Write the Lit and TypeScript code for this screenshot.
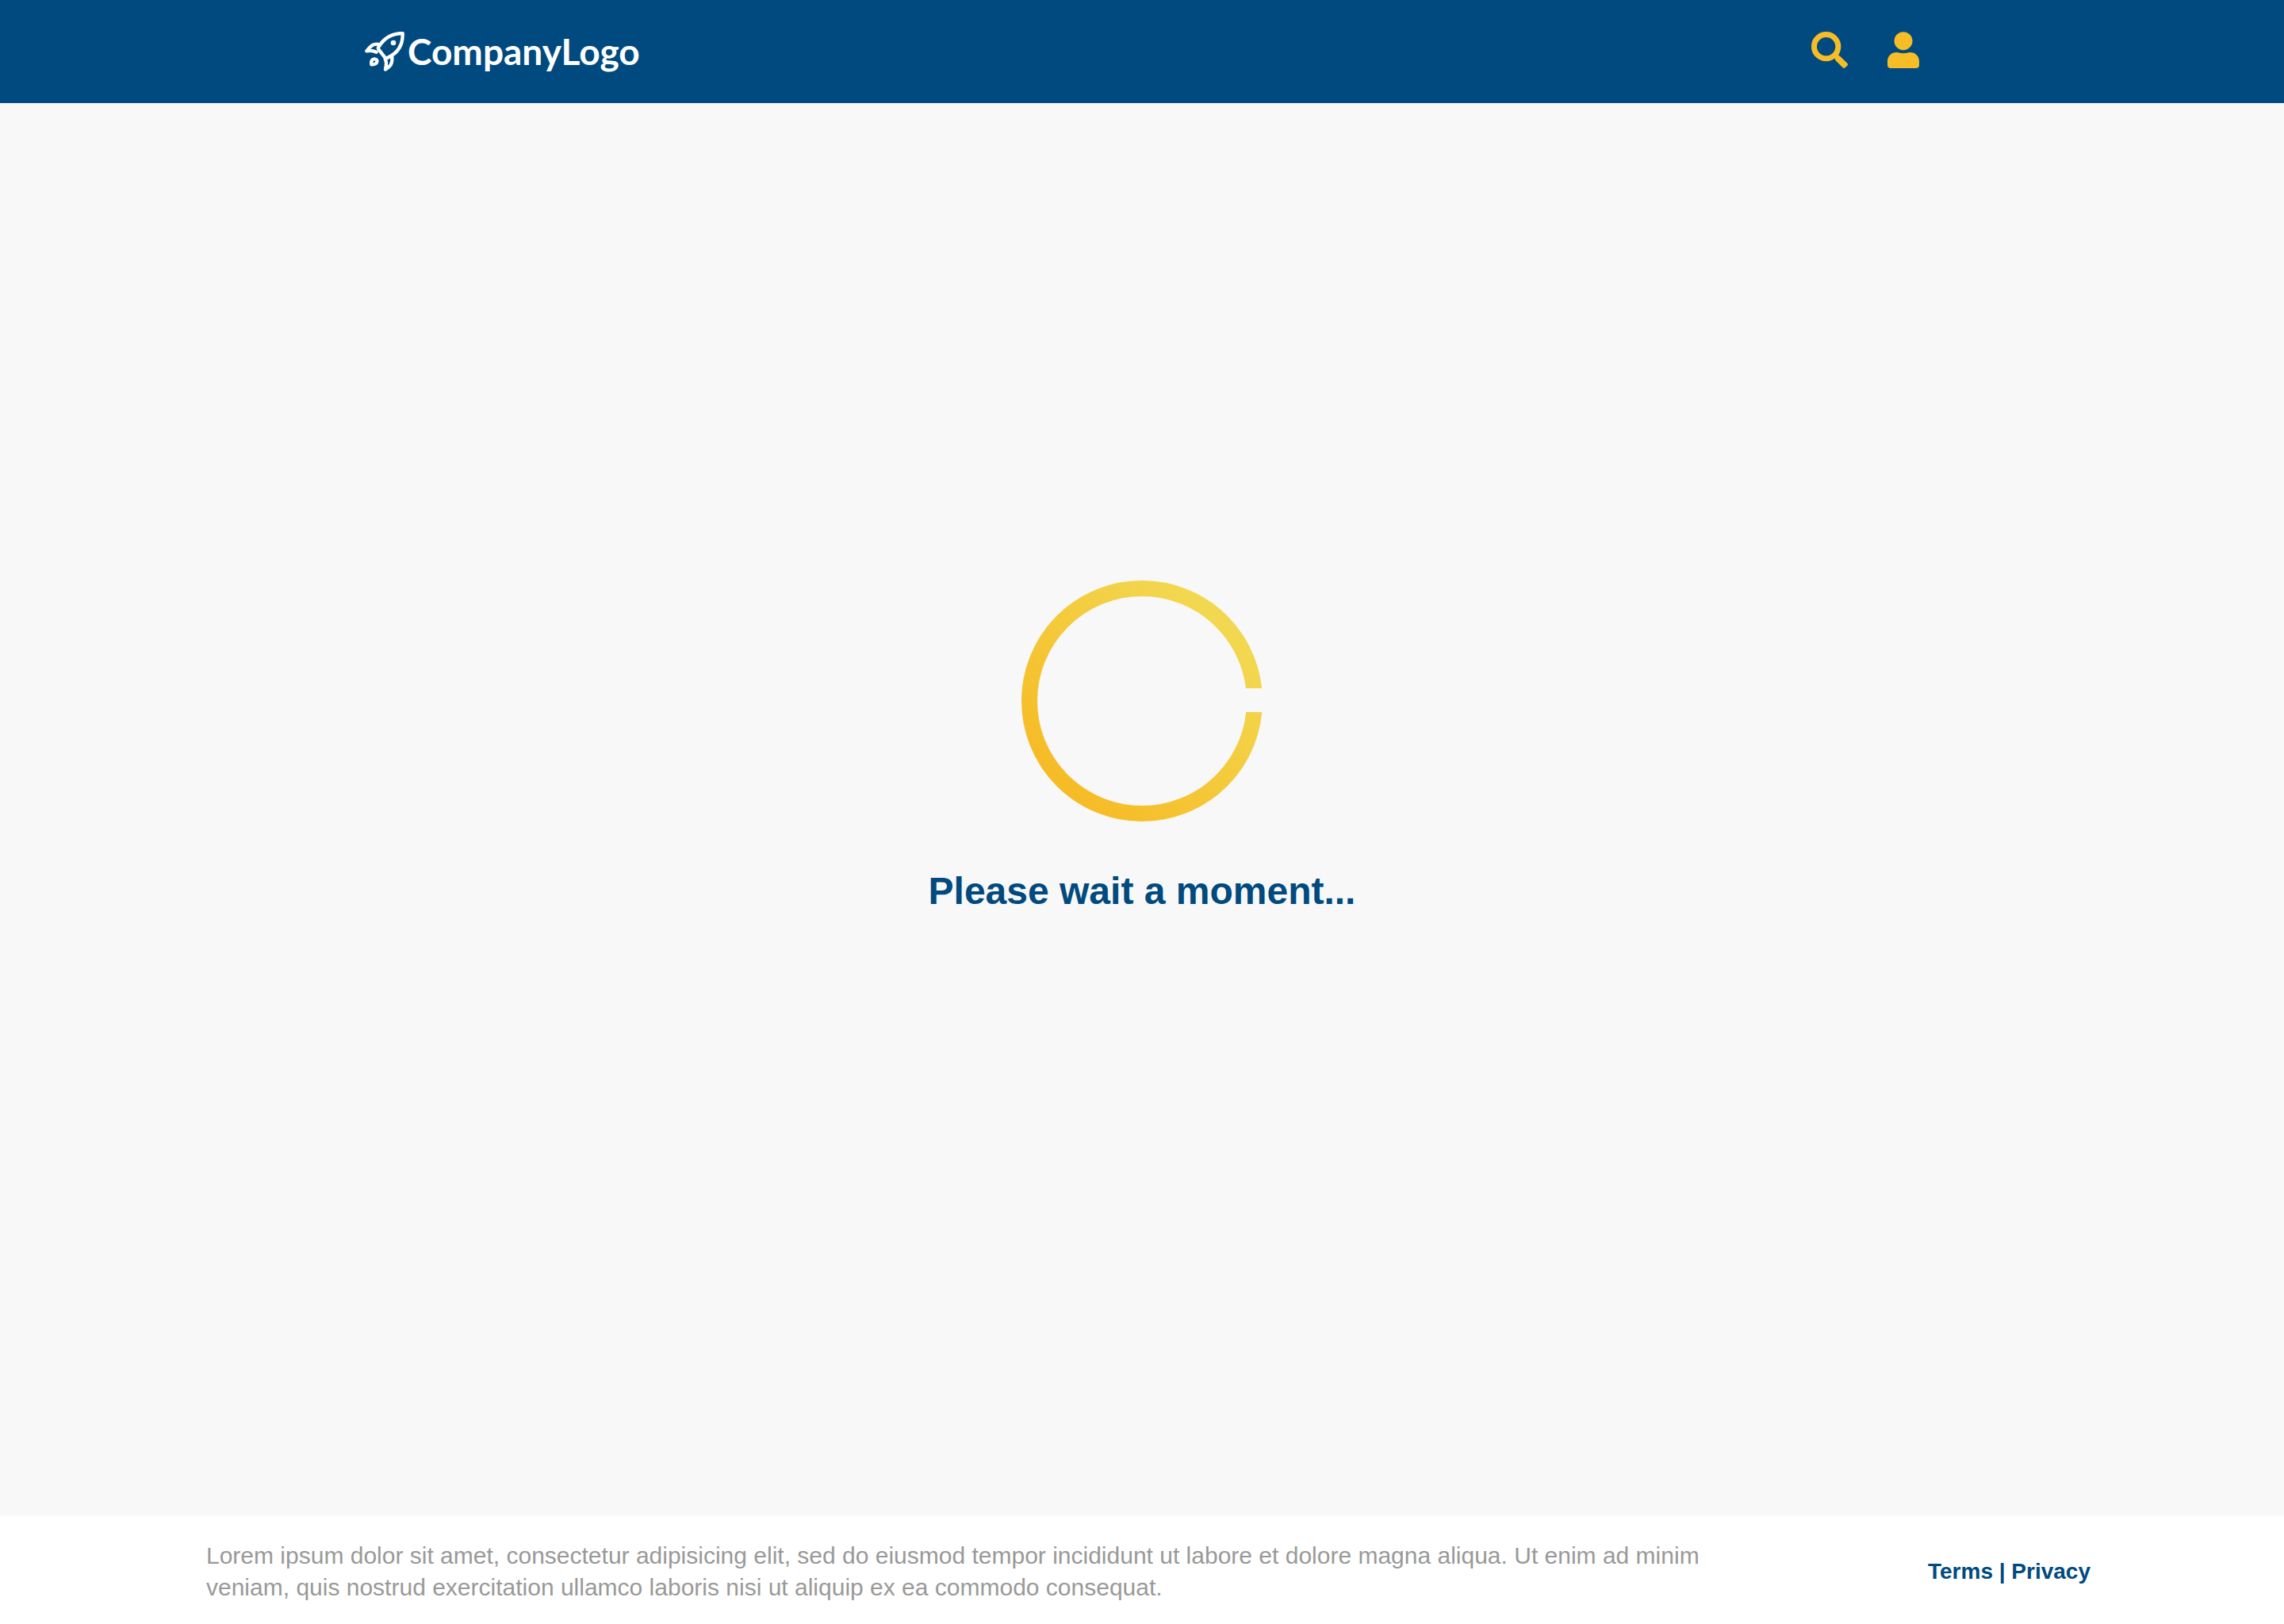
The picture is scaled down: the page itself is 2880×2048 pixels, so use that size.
import { LitElement, html, css } from "lit";
import { customElement } from "lit/decorators.js";

@customElement("site-header")
class SiteHeader extends LitElement {
  static styles = css`
    :host {
      display: block;
      background: #004a7f;
    }
    .bar {
      display: flex;
      justify-content: space-between;
      align-items: flex-start;
      box-sizing: border-box;
      max-width: 2000px;
      min-height: 130px;
      margin: 0 auto;
      padding: 40px 20px;
    }
    .logo {
      display: flex;
      align-items: center;
      gap: 4px;
      color: #fff;
      text-decoration: none;
      font: 700 46px/50px Lato, "Open Sans", sans-serif;
    }
    .rocket {
      width: 50px;
      height: 50px;
    }
    .actions {
      display: flex;
      gap: 50px;
    }
    .action {
      display: block;
      padding: 0;
      border: 0;
      background: none;
      color: #f6bd27;
      cursor: pointer;
    }
    .icon {
      display: block;
      height: 46px;
    }
  `;

  render() {
    return html`
      <header class="bar">
        <a class="logo" href="#">
          <svg class="rocket" viewBox="30 30 150 150" fill="none" stroke="currentColor" stroke-width="13" stroke-linejoin="round" stroke-linecap="round" aria-hidden="true">
            <path d="M173 36C134 36 103 53 82 88Q79 93 83 98L105 126Q110 132 117 128C152 112 175 84 173 36Z" />
            <path d="M84 78C64 73 54 82 37 103Q56 99 74 107" />
            <path d="M107 134C115 148 110 161 108 173C124 164 135 154 133 126" />
            <path d="M55 154C53 139 58 133 67 133C75 133 79 140 75 147C72 152 65 154 55 154Z" />
            <circle cx="138" cy="72" r="10" fill="currentColor" stroke="none" />
          </svg>
          <span>CompanyLogo</span>
        </a>
        <nav class="actions">
          <button class="action" type="button" aria-label="Search">
            <svg class="icon" viewBox="0 0 138 138" fill="none" stroke="currentColor">
              <circle cx="56" cy="56" r="45.5" stroke-width="21" />
              <path fill="currentColor" stroke="none" d="M86 100L100 88Q105 89 108 92L136 119Q140 124 136 128L128 136Q124 140 119 136L93 110Q89 106 90 101Z" />
            </svg>
          </button>
          <button class="action" type="button" aria-label="Account">
            <svg class="icon" viewBox="0 0 120 138" fill="currentColor">
              <circle cx="60" cy="35" r="34.5" />
              <path d="M0 112C0 92 15 78 35 78C43 78 48 82 60 82S77 78 85 78C105 78 120 92 120 112V126Q120 138 108 138H12Q0 138 0 126Z" />
            </svg>
          </button>
        </nav>
      </header>
    `;
  }
}

@customElement("loading-indicator")
class LoadingIndicator extends LitElement {
  static styles = css`
    :host {
      display: flex;
      flex-direction: column;
      align-items: center;
      gap: 58px;
    }
    .ring {
      display: block;
      width: 304px;
      height: 304px;
    }
    .message {
      margin: 0;
      color: #004a7f;
      font-size: 48px;
      line-height: 60px;
      font-weight: 700;
    }
  `;

  render() {
    return html`
      <svg class="ring" viewBox="0 0 304 304" aria-hidden="true">
        <defs>
          <linearGradient id="sweep" x1="0.1" y1="0.8" x2="0.8" y2="0.1">
            <stop offset="0" stop-color="#f6bc27" />
            <stop offset="1" stop-color="#f2d850" />
          </linearGradient>
          <mask id="gap">
            <rect width="304" height="304" fill="#fff" />
            <rect x="240" y="136" width="64" height="30" fill="#000" />
          </mask>
        </defs>
        <circle cx="152" cy="152" r="142" fill="none" stroke="url(#sweep)" stroke-width="20" mask="url(#gap)" />
      </svg>
      <p class="message" role="status">Please wait a moment...</p>
    `;
  }
}

@customElement("site-footer")
class SiteFooter extends LitElement {
  static styles = css`
    :host {
      display: block;
      background: #fff;
    }
    .bar {
      display: flex;
      justify-content: space-between;
      align-items: center;
      gap: 80px;
      box-sizing: border-box;
      max-width: 2400px;
      min-height: 136px;
      margin: 0 auto;
      padding: 30px 4px 26px 20px;
    }
    .blurb {
      flex: 0 1 1960px;
      margin: 0;
      color: #999;
      font-size: 30px;
      line-height: 40px;
    }
    .links {
      color: #004a7f;
      font-size: 28px;
      line-height: 40px;
      font-weight: 700;
      white-space: nowrap;
    }
    .link {
      color: inherit;
      text-decoration: none;
    }
  `;

  render() {
    return html`
      <footer class="bar">
        <p class="blurb">
          Lorem ipsum dolor sit amet, consectetur adipisicing elit, sed do eiusmod tempor incididunt ut labore et dolore
          magna aliqua. Ut enim ad minim veniam, quis nostrud exercitation ullamco laboris nisi ut aliquip ex ea commodo
          consequat.
        </p>
        <nav class="links"><a class="link" href="#terms">Terms</a> | <a class="link" href="#privacy">Privacy</a></nav>
      </footer>
    `;
  }
}

@customElement("app-root")
class AppRoot extends LitElement {
  static styles = css`
    :host {
      display: flex;
      flex-direction: column;
      min-height: 100vh;
      background: #f8f8f8;
      font-family: "Liberation Sans", Arial, sans-serif;
    }
    .content {
      flex: 1;
      display: flex;
      flex-direction: column;
      align-items: center;
      justify-content: center;
      padding-bottom: 156px;
    }
  `;

  render() {
    return html`
      <site-header></site-header>
      <main class="content"><loading-indicator></loading-indicator></main>
      <site-footer></site-footer>
    `;
  }
}
